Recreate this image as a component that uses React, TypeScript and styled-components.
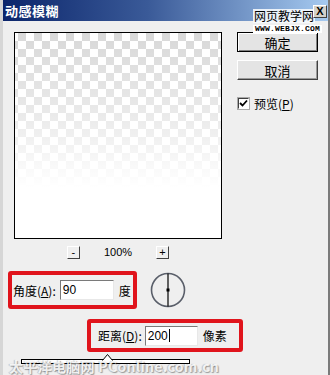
import React from 'react'
import styled, { createGlobalStyle } from 'styled-components'

const GlobalStyle = createGlobalStyle`
  html, body {
    margin: 0;
    padding: 0;
    background: #efefef;
  }
  body {
    font-family: "Noto Sans CJK SC", "Liberation Sans", sans-serif;
    font-size: 12px;
    color: #000;
  }
`

const Window = styled.div`
  position: relative;
  width: 330px;
  height: 375px;
  box-sizing: border-box;
  overflow: hidden;
  background: #efefef;
  border-left: 3px solid #d6d6d6;
  border-right: 2px solid #7a7a7a;
`

const TitleBar = styled.div`
  display: flex;
  align-items: center;
  height: 21px;
  margin-left: -3px;
  padding-left: 5px;
  background: linear-gradient(to right, #0a246a 0%, #3a5a98 45%, #a6caf0 100%);
  color: #fff;
  font-size: 13px;
  font-weight: bold;
  letter-spacing: 0.5px;
`

const CloseButton = styled.div`
  position: absolute;
  top: 5px;
  right: 1px;
  width: 12px;
  height: 11px;
  display: flex;
  align-items: center;
  justify-content: center;
  background: #d4d0c8;
  border: 1px solid;
  border-color: #fff #404040 #404040 #fff;
  font-family: "Liberation Sans", sans-serif;
  font-size: 11px;
  font-weight: bold;
  line-height: 1;
`

const SiteMark = styled.div`
  position: absolute;
  top: 9px;
  left: 250px;
  display: flex;
  flex-direction: column;
  align-items: flex-start;
`

const SiteName = styled.span`
  background: rgba(245, 248, 252, 0.9);
  padding: 0 1px;
  font-size: 12px;
  line-height: 14px;
`

const SiteUrl = styled.span`
  margin-top: 2px;
  padding: 0 2px;
  background: #fff;
  font-family: "Liberation Mono", monospace;
  font-size: 8px;
  font-weight: bold;
  line-height: 8px;
  letter-spacing: 0.2px;
`

const Content = styled.div`
  padding-top: 11px;
`

const Top = styled.div`
  display: flex;
  gap: 15px;
  margin-left: 11px;
`

const LeftCol = styled.div`
  display: flex;
  flex-direction: column;
  width: 208px;
`

const Preview = styled.div`
  width: 208px;
  height: 207px;
  box-sizing: border-box;
  border: 1px solid #000;
  background:
    linear-gradient(to bottom, rgba(255, 255, 255, 0.1) 0px, rgba(255, 255, 255, 0.5) 80px, #fff 155px, #fff 100%),
    conic-gradient(#d4d4d4 25%, #fff 0 50%, #d4d4d4 0 75%, #fff 0) -5px 0 / 16px 16px;
`

const ZoomRow = styled.div`
  display: flex;
  align-items: center;
  justify-content: center;
  gap: 24px;
  height: 14px;
  margin-top: 6px;
  font-family: "Liberation Sans", sans-serif;
  font-size: 11px;
`

const ZoomButton = styled.div`
  width: 11px;
  height: 11px;
  display: flex;
  align-items: center;
  justify-content: center;
  border: 1px solid;
  border-color: #fff #404040 #404040 #fff;
  font-size: 11px;
  line-height: 1;
`

const RightCol = styled.div`
  display: flex;
  flex-direction: column;
  width: 81px;
`

const Button = styled.div<{ $default?: boolean }>`
  height: 20px;
  box-sizing: border-box;
  display: flex;
  align-items: center;
  justify-content: center;
  background: #e4e4e4;
  border: 1px solid;
  border-color: ${({ $default }) => ($default ? '#000' : '#fff #404040 #404040 #fff')};
  box-shadow: ${({ $default }) => ($default ? 'inset 1px 1px 0 #fff, inset -1px -1px 0 #808080' : 'inset -1px -1px 0 #999')};
  font-size: 13px;
  & + & {
    margin-top: 8px;
  }
`

const CheckRow = styled.label`
  display: flex;
  align-items: center;
  gap: 5px;
  margin-top: 15px;
  margin-left: 1px;
  font-size: 12px;
`

const CheckBox = styled.span`
  width: 9px;
  height: 9px;
  display: flex;
  align-items: center;
  justify-content: center;
  background: #fff;
  border: 1px solid;
  border-color: #404040 #fff #fff #404040;
  box-shadow: 0 0 0 1px #aaa;
`

const Highlight = styled.div<{ $w: number; $h: number }>`
  display: flex;
  align-items: center;
  width: ${({ $w }) => $w}px;
  height: ${({ $h }) => $h}px;
  box-sizing: border-box;
  border: 4px solid #e0141c;
  border-radius: 3px;
`

const AngleRow = styled.div`
  display: flex;
  align-items: center;
  gap: 13px;
  margin-top: 12px;
  margin-left: 5px;
`

const DistanceRow = styled.div`
  display: flex;
  margin-top: 10px;
  margin-left: 84px;
`

const Label = styled.span<{ $pad: number }>`
  padding-left: ${({ $pad }) => $pad}px;
  font-size: 12px;
  white-space: nowrap;
`

const Field = styled.div<{ $w: number; $gap: number }>`
  width: ${({ $w }) => $w}px;
  height: 20px;
  box-sizing: border-box;
  margin-left: ${({ $gap }) => $gap}px;
  margin-right: 5px;
  display: flex;
  align-items: center;
  padding-left: 2px;
  background: #fff;
  border: 1px solid;
  border-color: #7a7a7a #e8e8e8 #e8e8e8 #7a7a7a;
  font-family: "Liberation Sans", sans-serif;
  font-size: 12px;
`

const Caret = styled.span`
  width: 1px;
  height: 13px;
  background: #000;
  margin-left: 1px;
`

const Track = styled.div`
  position: relative;
  width: 169px;
  height: 5px;
  box-sizing: border-box;
  margin-top: 7px;
  margin-left: 18px;
  border: 1px solid #000;
  background: #fff;
`

const Thumb = styled.svg`
  position: absolute;
  left: 80px;
  top: -6px;
`

const FooterMark = styled.div`
  position: absolute;
  left: 6px;
  bottom: 1px;
  color: rgba(255, 255, 255, 0.85);
  font-size: 14px;
  line-height: 16px;
  font-weight: bold;
  letter-spacing: 0.3px;
  white-space: nowrap;
  text-shadow: 1px 1px 1px rgba(0, 0, 0, 0.35), -1px 0 1px rgba(0, 0, 0, 0.2);
`

const Dial = () => (
  <svg width="36" height="36" viewBox="0 0 36 36">
    <circle cx="18" cy="18" r="16.5" fill="#efefef" stroke="#5a5f6a" strokeWidth="1.6" />
    <line x1="18" y1="1.5" x2="18" y2="34.5" stroke="#000" strokeWidth="1.2" />
    <rect x="16.5" y="16.5" width="3" height="3" fill="#000" />
  </svg>
)

const App = () => (
  <>
    <GlobalStyle />
    <Window>
      <TitleBar>动感模糊</TitleBar>
      <SiteMark>
        <SiteName>网页教学网</SiteName>
        <SiteUrl>WWW.WEBJX.COM</SiteUrl>
      </SiteMark>
      <CloseButton>X</CloseButton>
      <Content>
        <Top>
          <LeftCol>
            <Preview />
            <ZoomRow>
              <ZoomButton>-</ZoomButton>
              <span>100%</span>
              <ZoomButton>+</ZoomButton>
            </ZoomRow>
          </LeftCol>
          <RightCol>
            <Button $default>确定</Button>
            <Button>取消</Button>
            <CheckRow>
              <CheckBox>
                <svg width="9" height="9" viewBox="0 0 9 9">
                  <path d="M1 4 L3.5 6.5 L8 1.5" fill="none" stroke="#000" strokeWidth="1.8" />
                </svg>
              </CheckBox>
              <span>
                预览(<u>P</u>)
              </span>
            </CheckRow>
          </RightCol>
        </Top>
        <AngleRow>
          <Highlight $w={129} $h={38}>
            <Label $pad={1}>
              角度(<u>A</u>):
            </Label>
            <Field $w={54} $gap={4}>
              90
            </Field>
            <span>度</span>
          </Highlight>
          <Dial />
        </AngleRow>
        <DistanceRow>
          <Highlight $w={156} $h={33}>
            <Label $pad={7}>
              距离(<u>D</u>):
            </Label>
            <Field $w={53} $gap={3}>
              200
              <Caret />
            </Field>
            <span>像素</span>
          </Highlight>
        </DistanceRow>
        <Track>
          <Thumb width="11" height="7" viewBox="0 0 11 7">
            <path d="M0.5 6.5 L5.5 0.5 L10.5 6.5" fill="#fff" stroke="#000" strokeWidth="1" />
          </Thumb>
        </Track>
      </Content>
      <FooterMark>太平洋电脑网 PConline.com.cn</FooterMark>
    </Window>
  </>
)

export default App
